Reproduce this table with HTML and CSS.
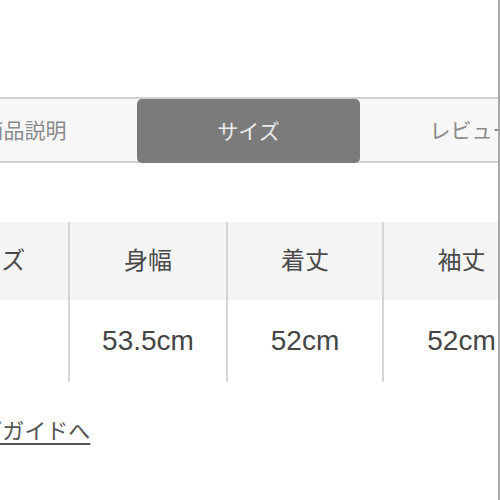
FILE: index.html
```html
<!DOCTYPE html>
<html lang="ja">
<head>
<meta charset="utf-8">
<link rel="stylesheet" href="styles.css">
</head>
<body>
<div class="screen">
  <div class="tabs">
    <div class="tab">商品説明</div>
    <div class="tab active">サイズ</div>
    <div class="tab">レビュー</div>
  </div>
  <div class="size-table">
    <div class="cell head">サイズ</div>
    <div class="cell head sep">身幅</div>
    <div class="cell head sep">着丈</div>
    <div class="cell head sep">袖丈</div>
    <div class="cell val"></div>
    <div class="cell val sep">53.5cm</div>
    <div class="cell val sep">52cm</div>
    <div class="cell val sep">52cm</div>
  </div>
  <a class="guide" href="#">サイズガイドへ</a>
</div>
</body>
</html>
```
FILE: styles.css
```css
html, body {
  margin: 0;
  padding: 0;
  background: #fff;
}
body {
  font-family: "Liberation Sans", "Noto Sans CJK JP", sans-serif;
  color: #555;
}
.screen {
  width: 498px;
  height: 500px;
  overflow: hidden;
  border-right: 2px solid #a8a8a8;
}
.tabs {
  margin-top: 97px;
  margin-left: -88px;
  width: 680px;
  display: flex;
  height: 62px;
  border-top: 2px solid #d0d0d0;
  border-bottom: 2px solid #d0d0d0;
  background: #f7f7f7;
}
.tab {
  width: 223px;
  flex: none;
  display: flex;
  align-items: center;
  justify-content: center;
  font-size: 21px;
  color: #8a8a8a;
  line-height: 1;
}
.tab:first-child {
  width: 225px;
}
.tab.active {
  background: #7b7b7b;
  color: #ececec;
  border-radius: 5px;
  margin-bottom: -2px;
}
.size-table {
  margin-top: 59px;
  margin-left: -89px;
  display: grid;
  grid-template-columns: 157px 158px 156px 157px;
  grid-template-rows: 78px 82px;
  width: 628px;
}
.cell {
  display: flex;
  align-items: center;
  justify-content: center;
  line-height: 1;
}
.cell.sep {
  border-left: 2px solid #d6d6d6;
}
.head {
  background: #f4f4f4;
  font-size: 24px;
  color: #4a4a4a;
}
.val {
  font-size: 28px;
  color: #454545;
}
.guide {
  display: inline-block;
  margin-top: 37px;
  margin-left: -63px;
  font-size: 22px;
  line-height: 1.2;
  color: #555;
  text-decoration: underline;
  text-underline-offset: 4px;
  text-decoration-thickness: 2px;
}
```
